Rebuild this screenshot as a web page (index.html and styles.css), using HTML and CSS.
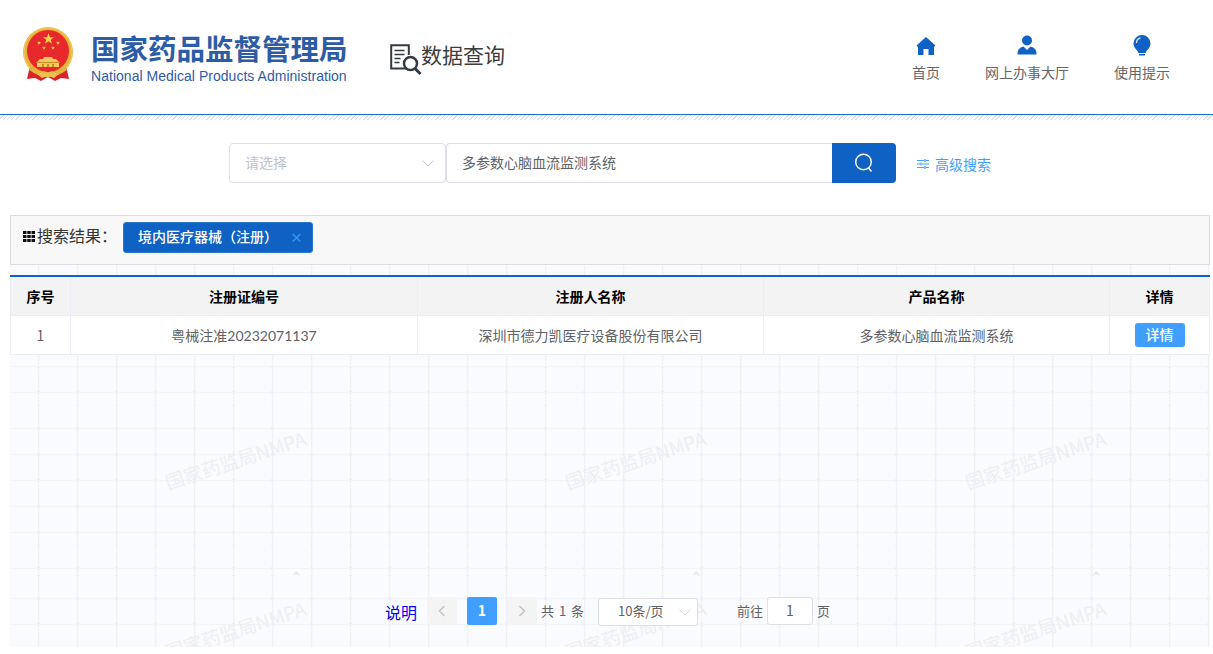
FILE: index.html
```html
<!DOCTYPE html>
<html lang="zh-CN">
<head>
<meta charset="utf-8">
<title>数据查询</title>
<link rel="stylesheet" href="styles.css">
</head>
<body>
<header class="header">
  <div class="brand">
    <svg class="emblem" viewBox="23 27 50 55" width="50" height="55">
      <defs>
        <polygon id="star" points="0,-1 .225,-.309 .951,-.309 .363,.118 .588,.809 0,.382 -.588,.809 -.363,.118 -.951,-.309 -.225,-.309"/>
      </defs>
      <path d="M30 66l-3 13 8-1 6 3 7-4 7 4 6-3 8 1-3-13z" fill="#d9252a"/>
      <circle cx="48" cy="52" r="25" fill="#e6b23a"/>
      <circle cx="48" cy="52" r="24" fill="none" stroke="#f2cf68" stroke-width="1"/>
      <circle cx="48" cy="51" r="21" fill="#e8292b"/>
      <path d="M31 67q17 11 34 0l2 3q-19 13-38 0z" fill="#e6b23a"/>
      <use href="#star" transform="translate(48.5 39) scale(6)" fill="#f6d24c"/>
      <use href="#star" transform="translate(39 43) scale(2.2)" fill="#f6d24c"/>
      <use href="#star" transform="translate(58 43) scale(2.2)" fill="#f6d24c"/>
      <use href="#star" transform="translate(44 48) scale(2.2)" fill="#f6d24c"/>
      <use href="#star" transform="translate(53 48) scale(2.2)" fill="#f6d24c"/>
      <path d="M44 57h8l1 2h3l3 3v5H37v-5l3-3h3z" fill="#f3c95c"/>
      <path d="M36 62h24v1H36zM42 64h2v3h-2zM47 64h2v3h-2zM52 64h2v3h-2z" fill="#c98a2a"/>
      <path d="M40 73l4-2 4 2 4-2 4 2 3 1-5 4-6-2-6 2-5-4z" fill="#eec04f"/>
    </svg>
    <div class="brand-text">
      <div class="brand-cn">国家药品监督管理局</div>
      <div class="brand-en">National Medical Products Administration</div>
    </div>
  </div>
  <div class="page-title">
    <svg class="title-icon" viewBox="0 0 32 32" width="32" height="32">
      <path d="M17 24.500H1.200V1.200h17.600V11" fill="none" stroke="#333a45" stroke-width="2"/>
      <path d="M4.500 6.500h10M4.500 10.500h10M4.500 14.500h6M4.500 18.500h5" stroke="#333a45" stroke-width="1.500"/>
      <circle cx="20.500" cy="19.500" r="6.500" fill="#fff" stroke="#333a45" stroke-width="2.500"/>
      <path d="M25 24.500l5.500 5.500" stroke="#333a45" stroke-width="3"/>
    </svg>
    <span class="title-text">数据查询</span>
  </div>
  <nav class="nav">
    <a class="nav-item">
      <svg viewBox="0 0 20 20" width="20" height="20"><path d="M10 1L0.500 9.500 2 11v8h5.500v-6h5v6H18v-8l1.500-1.500z" fill="#0f62c3"/></svg>
      <span>首页</span>
    </a>
    <a class="nav-item">
      <svg class="person" viewBox="0 0 20 20" width="20" height="20"><circle cx="10" cy="5.500" r="5" fill="#0f62c3"/><path d="M0.500 19.500c0-5 2-7 6-8l3.500 3.500 3.500-3.500c4 1 6 3 6 8z" fill="#0f62c3"/></svg>
      <span>网上办事大厅</span>
    </a>
    <a class="nav-item">
      <svg class="bulb" viewBox="0 0 20 24" width="20" height="24"><path d="M10 1a8.500 8.500 0 0 0-8.500 8.500c0 3.500 2 5 4 7.500l1 2h7l1-2c2-2.500 4-4 4-7.500A8.500 8.500 0 0 0 10 1z" fill="#0f62c3"/><path d="M7 20h6v1.500H7z" fill="#0f62c3"/><path d="M4.500 9C4.500 6.500 6 4.500 8.500 4" fill="none" stroke="#cfe0f5" stroke-width="1.300"/></svg>
      <span>使用提示</span>
    </a>
  </nav>
</header>
<div class="hatch"></div>

<section class="search">
  <div class="select">
    <span class="select-text">请选择</span>
    <svg class="chev" viewBox="0 0 12 7" width="12" height="7"><path d="M.5.500L6 6 11.500.500" fill="none" stroke="#c0c4cc"/></svg>
  </div>
  <div class="keyword">多参数心脑血流监测系统</div>
  <div class="search-btn">
    <svg viewBox="0 0 20 20" width="20" height="20"><circle cx="9.500" cy="9" r="7.800" fill="none" stroke="#fff" stroke-width="1.400"/><path d="M14.500 15l3 3.500" stroke="#fff" stroke-width="1.400"/></svg>
  </div>
  <a class="advanced">
    <svg viewBox="0 0 12 12" width="12" height="12"><path d="M0 2.500h7M9 2.500h3M0 6h3M5 6h7M0 9.500h7M9 9.500h3" stroke="#409eff"/><path d="M8 1v3M4 4.500v3M8 8v3" stroke="#409eff" stroke-width="1.300"/></svg>
    <span>高级搜索</span>
  </a>
</section>

<main class="content">
  <div class="filter">
    <svg class="grid-icon" viewBox="0 0 12 11" width="12" height="11"><path d="M0 0h3.500v3H0zM4.250 0h3.500v3h-3.500zM8.500 0H12v3H8.500zM0 4h3.500v3H0zM4.250 4h3.500v3h-3.500zM8.500 4H12v3H8.500zM0 8h3.500v3H0zM4.250 8h3.500v3h-3.500zM8.500 8H12v3H8.500z" fill="#111"/></svg>
    <span class="filter-label">搜索结果：</span>
    <span class="tag">境内医疗器械（注册）<i class="tag-x">×</i></span>
  </div>
  <div class="results">
    <svg class="paper" viewBox="10 265 1200 382" width="1200" height="382">
      <defs>
        <pattern id="tile" patternUnits="userSpaceOnUse" x="36" y="265" width="39" height="382">
          <rect x="2" y="0" width="1.300" height="382" fill="#f0f1f4"/>
          <path d="M1 101h3v2.500H1zM1 126h3v3H1zM1 140h3v1H1zM1 162h3v3H1zM1 188h3v3H1zM1 214h3v3H1zM1 240h3v3H1zM1 266h3v3H1zM1 280h3v1H1zM1 302h3v3H1zM1 310h3v1H1zM1 332h3v3H1zM1 358h3v3H1z" fill="#eeeff2"/>
        </pattern>
      </defs>
      <rect x="10" y="265" width="1200" height="382" fill="#fafbff"/>
      <rect x="10" y="265" width="1200" height="382" fill="url(#tile)"/>
      <path class="rules" d="M10 366.500h1200M10 392.500h1200M10 428.500h1200M10 454.500h1200M10 480.500h1200M10 506.500h1200M10 532.500h1200M10 568.500h1200M10 598.500h1200M10 624.500h1200"/>
      <g class="mark">
        <text transform="translate(168 490) rotate(-18)">国家药监局NMPA</text>
        <text transform="translate(568 490) rotate(-18)">国家药监局NMPA</text>
        <text transform="translate(968 490) rotate(-18)">国家药监局NMPA</text>
        <text transform="translate(168 660) rotate(-18)">国家药监局NMPA</text>
        <text transform="translate(568 660) rotate(-18)">国家药监局NMPA</text>
        <text transform="translate(968 660) rotate(-18)">国家药监局NMPA</text>
      </g>
      <path class="caret" d="M293 575l3-4 4 4-1.500.5-2.500-2-2 2zM693 575l3-4 4 4-1.500.5-2.500-2-2 2zM1093 575l3-4 4 4-1.500.5-2.500-2-2 2z"/>
    </svg>
    <table class="table">
      <colgroup>
        <col class="c1"><col class="c2"><col class="c3"><col class="c3"><col class="c5">
      </colgroup>
      <thead>
        <tr><th>序号</th><th>注册证编号</th><th>注册人名称</th><th>产品名称</th><th>详情</th></tr>
      </thead>
      <tbody>
        <tr>
          <td>1</td>
          <td class="code">粤械注准20232071137</td>
          <td>深圳市德力凯医疗设备股份有限公司</td>
          <td>多参数心脑血流监测系统</td>
          <td><a class="detail">详情</a></td>
        </tr>
      </tbody>
    </table>
    <div class="pager">
      <a class="note">说明</a>
      <span class="pg pg-off"><svg viewBox="0 0 8 12" width="8" height="12"><path d="M6.500 1L1.500 6l5 5" fill="none" stroke="#c0c4cc" stroke-width="1.500"/></svg></span>
      <span class="pg pg-on">1</span>
      <span class="pg pg-off"><svg viewBox="0 0 8 12" width="8" height="12"><path d="M1.500 1l5 5-5 5" fill="none" stroke="#c0c4cc" stroke-width="1.500"/></svg></span>
      <span class="total">共 1 条</span>
      <span class="size">10条/页<svg class="size-chev" viewBox="0 0 12 7" width="12" height="7"><path d="M.5.500L6 6 11.500.500" fill="none" stroke="#d3d6dc"/></svg></span>
      <span class="goto">前往</span>
      <span class="jump">1</span>
      <span class="unit">页</span>
    </div>
  </div>
</main>
</body>
</html>
```

FILE: styles.css
```css
* { box-sizing: border-box; }
html, body { margin: 0; padding: 0; background: #fff; }
body {
  font-family: "Noto Sans CJK SC", "Liberation Sans", sans-serif;
  font-size: 14px;
  color: #606266;
  overflow: hidden;
}

.header {
  height: 115px;
  border-bottom: 1px solid #1a6fc9;
  display: flex;
  align-items: flex-start;
  padding: 27px 43px 0 23px;
}
.brand { display: flex; width: 367px; flex: none; }
.emblem { flex: none; display: block; }
.brand-text { margin-left: 18px; color: #2d5ca6; }
.brand-cn {
  font-size: 28.500px;
  font-weight: 700;
  line-height: 40px;
  margin-top: 1px;
  white-space: nowrap;
}
.brand-en {
  font-family: "Liberation Sans", sans-serif;
  font-size: 14px;
  line-height: 16px;
  letter-spacing: .03px;
  white-space: nowrap;
}
.page-title {
  display: flex;
  align-items: flex-start;
  color: #3d3d3d;
  white-space: nowrap;
}
.title-icon { flex: none; display: block; margin-top: 17px; }
.title-text { font-size: 21px; line-height: 30px; margin: 12px 0 0 -1px; }
.nav { margin-left: auto; display: flex; gap: 45px; padding-top: 9px; }
.nav-item {
  display: flex;
  flex-direction: column;
  align-items: center;
  height: 46px;
  justify-content: space-between;
  color: #666;
  white-space: nowrap;
  line-height: 20px;
}
.person { margin-top: -1px; }
.bulb { margin-top: -2px; }

.hatch {
  height: 5px;
  background: repeating-linear-gradient(135deg, #fff 0, #fff 2px, #dde2e9 2px, #dde2e9 3px);
}

.search {
  display: flex;
  align-items: center;
  margin-top: 23px;
  padding-left: 229px;
  height: 40px;
}
.select {
  width: 217px;
  height: 40px;
  border: 1px solid #dcdfe6;
  border-radius: 4px;
  display: flex;
  align-items: center;
  justify-content: space-between;
  padding: 0 11px 0 15px;
  color: #c0c4cc;
}
.select-text { margin-bottom: 2px; }
.keyword {
  width: 386px;
  height: 40px;
  border: 1px solid #dcdfe6;
  border-right: 0;
  border-radius: 4px 0 0 4px;
  line-height: 36px;
  padding-left: 15px;
}
.search-btn {
  width: 64px;
  height: 40px;
  background: #0f62c3;
  border-radius: 0 4px 4px 0;
  display: flex;
  align-items: center;
  justify-content: center;
}
.advanced {
  margin-left: 21px;
  display: flex;
  align-items: center;
  gap: 6px;
  color: #409eff;
  padding-top: 2px;
}

.content { margin: 32px 3px 0 10px; }
.filter {
  height: 50px;
  border: 1px solid #ddd;
  background: #f8f8f8;
  display: flex;
  align-items: flex-start;
  padding: 6px 0 0 12px;
}
.grid-icon { flex: none; margin: 9px 2px 0 0; }
.filter-label { font-size: 16px; line-height: 26px; color: #333; width: 86px; flex: none; }
.tag {
  width: 190px;
  height: 31px;
  background: #0f62c3;
  border: 1px solid #2c78cf;
  border-radius: 3px;
  color: #fff;
  font-size: 14px;
  line-height: 27px;
  padding-left: 14px;
  white-space: nowrap;
  font-weight: 500;
}
.tag-x { font-style: normal; color: #409eff; margin-left: 12px; font-size: 13px; }

.results { position: relative; height: 382px; padding-top: 10px; }
.paper { position: absolute; left: 0; top: 0; display: block; }
.rules { stroke: #f3f4f7; stroke-width: 1; fill: none; }
.mark text {
  font-family: "Noto Sans CJK SC", sans-serif;
  font-size: 19px;
  fill: #eeeff2;
}
.caret { fill: #e6e7eb; stroke: none; }

.table {
  position: relative;
  width: 1200px;
  table-layout: fixed;
  border-collapse: separate;
  border-spacing: 0;
  border-top: 2px solid #0f62c3;
  background: #fff;
}
.c1 { width: 61px; }
.c2 { width: 347px; }
.c3 { width: 346px; }
.c5 { width: 100px; }
.table th, .table td {
  height: 39px;
  padding: 0;
  text-align: center;
  border-right: 1px solid #ebeef5;
  border-bottom: 1px solid #ebeef5;
  font-size: 14px;
}
.table th:first-child, .table td:first-child { border-left: 1px solid #ebeef5; }
.table th { background: #f3f3f3; color: #000; font-weight: 700; }
.table td { color: #606266; background: #fff; }
.table td.code { font-family: Lato, "Noto Sans CJK SC", sans-serif; }
.detail {
  display: inline-block;
  width: 50px;
  height: 24px;
  line-height: 22px;
  margin-bottom: 1px;
  background: #409eff;
  color: #fff;
  border-radius: 3px;
  vertical-align: middle;
  font-weight: 500;
}

.pager {
  position: relative;
  display: flex;
  align-items: center;
  height: 30px;
  margin-top: 241px;
  padding-left: 375px;
  font-size: 13px;
}
.note { color: #0000ee; font-size: 16px; width: 32px; margin: 0 10px 0 0; white-space: nowrap; padding-top: 2px; flex: none; }
.pg {
  width: 30px;
  height: 28px;
  margin-right: 10px;
  border-radius: 2px;
  display: flex;
  align-items: center;
  justify-content: center;
  flex: none;
}
.pg-off { background: #f4f4f5; }
.pg-on { background: #409eff; color: #fff; font-weight: 700; font-size: 14px; padding-bottom: 2px; }
.total { margin: 0 0 2px -6px; width: 57px; white-space: nowrap; word-spacing: 2px; flex: none; }
.size {
  position: relative;
  width: 100px;
  height: 28px;
  border: 1px solid #dcdfe6;
  border-radius: 3px;
  background: #fff;
  line-height: 24px;
  padding-left: 19px;
  margin-top: 1px;
  white-space: nowrap;
  flex: none;
}
.size-chev { position: absolute; right: 6px; top: 10px; }
.goto { margin: 0 0 2px 39px; width: 30px; white-space: nowrap; flex: none; }
.jump {
  width: 46px;
  height: 28px;
  border: 1px solid #dcdfe6;
  border-radius: 3px;
  background: #fff;
  text-align: center;
  line-height: 24px;
  font-size: 14px;
  flex: none;
}
.unit { margin: 0 0 2px 4px; }
```
